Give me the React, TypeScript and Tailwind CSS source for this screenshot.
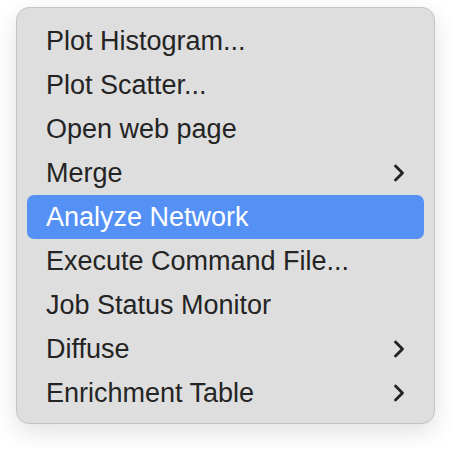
import React from "react";

const items: { label: string; sub?: boolean; active?: boolean }[] = [
  { label: "Plot Histogram..." },
  { label: "Plot Scatter..." },
  { label: "Open web page" },
  { label: "Merge", sub: true },
  { label: "Analyze Network", active: true },
  { label: "Execute Command File..." },
  { label: "Job Status Monitor" },
  { label: "Diffuse", sub: true },
  { label: "Enrichment Table", sub: true },
];

function Chevron({ white }: { white?: boolean }) {
  return (
    <svg width="16" height="20" viewBox="0 0 16 20" fill="none">
      <path
        d="M4.5 3 L11.5 10 L4.5 17"
        stroke={white ? "#ffffff" : "#222222"}
        strokeWidth="2.8"
        strokeLinecap="round"
        strokeLinejoin="round"
      />
    </svg>
  );
}

export default function App() {
  return (
    <div className="w-[453px] h-[449px] bg-white pt-[7px] pl-[16px]">
      <div
        className="w-[419px] h-[417px] rounded-[13px] bg-[#dedede] border border-[#c4c4c4] shadow-[0_8px_24px_rgba(0,0,0,0.12)] pt-[11px] px-[10px]"
        style={{ fontFamily: '"Liberation Sans", Arial, sans-serif' }}
      >
        {items.map((it) => (
          <div
            key={it.label}
            className={
              "h-[44px] flex items-center justify-between pl-[19px] pr-[17px] rounded-[7px] text-[27px] " +
              (it.active ? "bg-[#5591f5] text-white" : "text-[#242424]")
            }
          >
            <span className="leading-none">{it.label}</span>
            {it.sub && <Chevron white={it.active} />}
          </div>
        ))}
      </div>
    </div>
  );
}
